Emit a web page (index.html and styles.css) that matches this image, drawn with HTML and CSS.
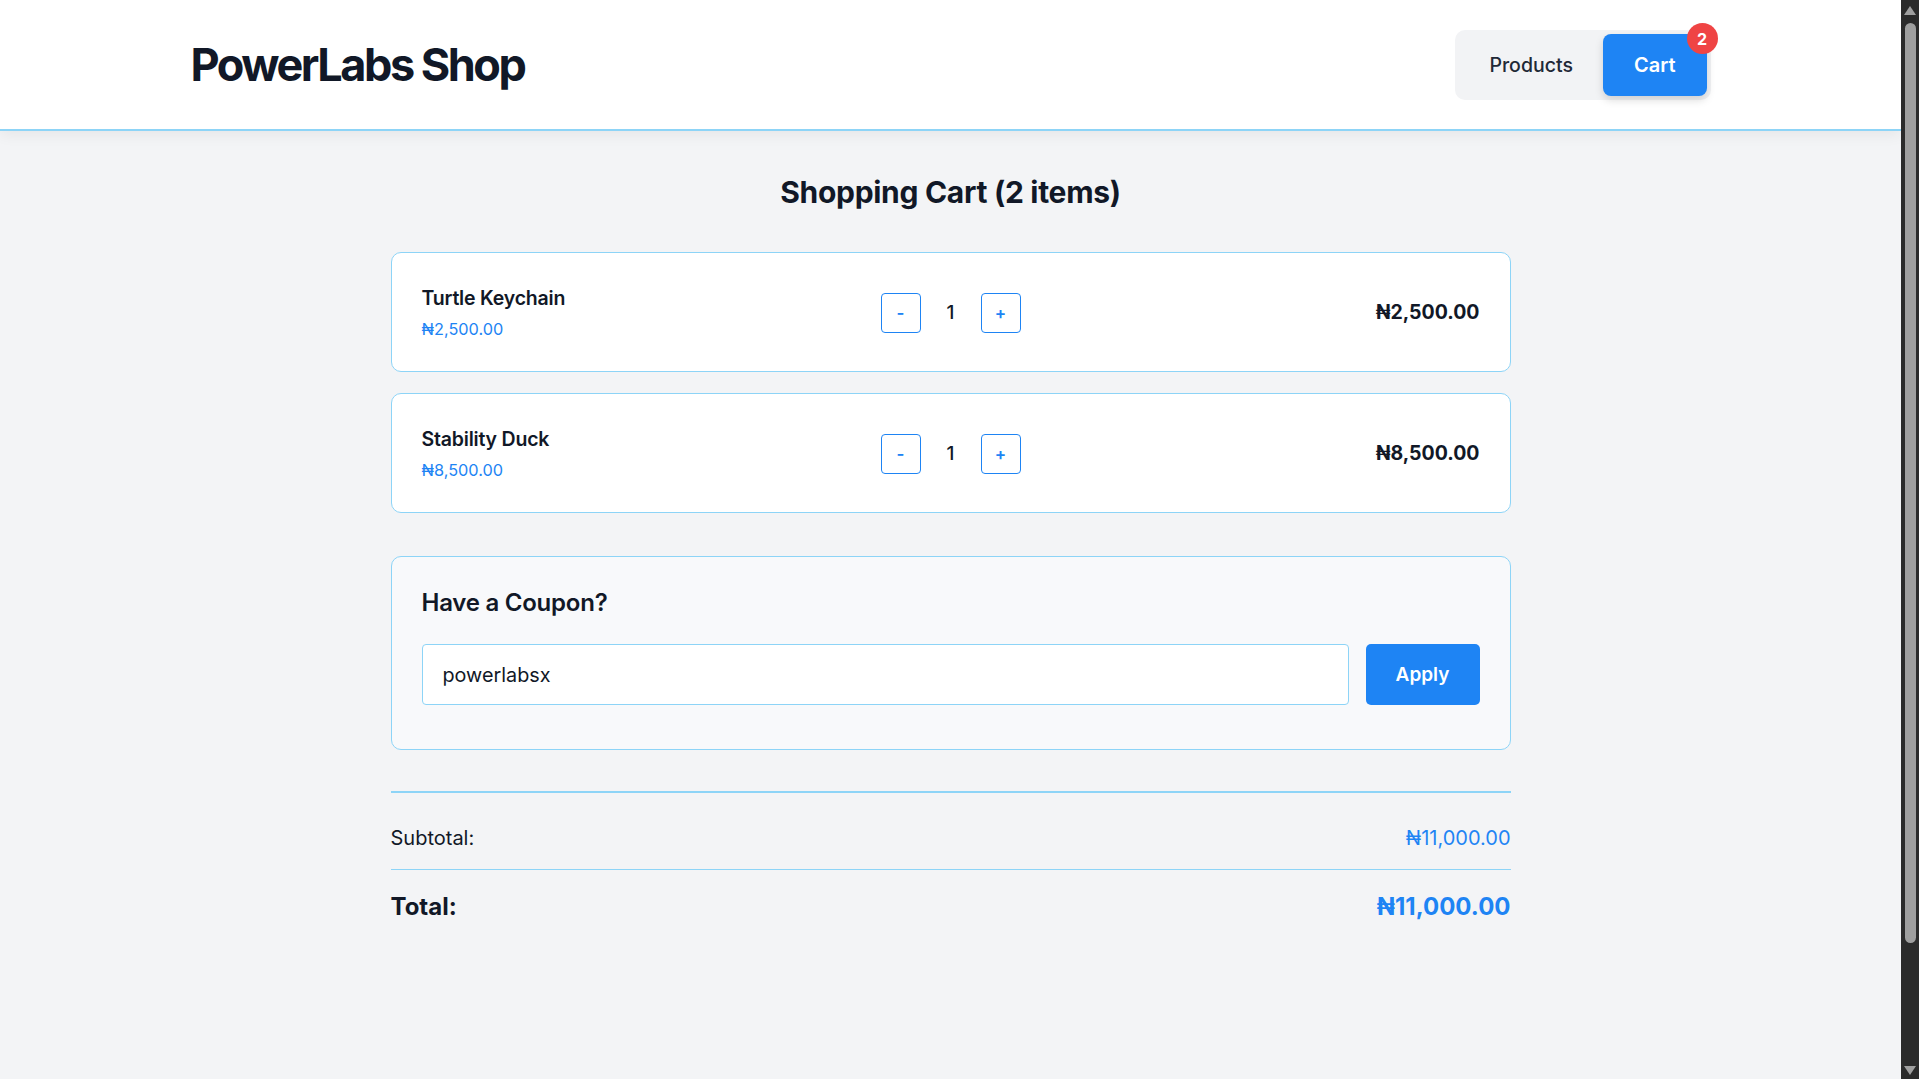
FILE: index.html
```html
<!DOCTYPE html>
<html lang="en">
<head>
<meta charset="utf-8">
<title>PowerLabs Shop</title>
<link rel="stylesheet" href="styles.css">
</head>
<body>
<header class="site-header">
  <div class="header-inner">
    <h1 class="brand">PowerLabs Shop</h1>
    <nav class="nav-pill">
      <button class="nav-btn">Products</button>
      <button class="nav-btn nav-btn-active">Cart<span class="badge">2</span></button>
    </nav>
  </div>
</header>
<main class="main">
  <div class="cart">
    <h2 class="cart-title">Shopping Cart (2 items)</h2>
    <div class="cart-list">
      <div class="cart-item">
        <div class="item-info">
          <div class="item-name">Turtle Keychain</div>
          <div class="item-price">₦2,500.00</div>
        </div>
        <div class="qty">
          <button class="qty-btn">-</button>
          <span class="qty-value">1</span>
          <button class="qty-btn">+</button>
        </div>
        <div class="item-total">₦2,500.00</div>
      </div>
      <div class="cart-item">
        <div class="item-info">
          <div class="item-name">Stability Duck</div>
          <div class="item-price">₦8,500.00</div>
        </div>
        <div class="qty">
          <button class="qty-btn">-</button>
          <span class="qty-value">1</span>
          <button class="qty-btn">+</button>
        </div>
        <div class="item-total">₦8,500.00</div>
      </div>
    </div>
    <section class="coupon">
      <h3 class="coupon-title">Have a Coupon?</h3>
      <div class="coupon-form">
        <input class="coupon-input" type="text" value="powerlabsx">
        <button class="apply-btn">Apply</button>
      </div>
    </section>
    <section class="summary">
      <div class="summary-row">
        <span>Subtotal:</span>
        <span class="summary-value">₦11,000.00</span>
      </div>
      <div class="summary-row summary-total">
        <span>Total:</span>
        <span class="summary-value">₦11,000.00</span>
      </div>
    </section>
  </div>
</main>
<div class="scrollbar" aria-hidden="true">
  <div class="sb-arrow sb-up"></div>
  <div class="sb-thumb"></div>
  <div class="sb-arrow sb-down"></div>
</div>
</body>
</html>
```
FILE: styles.css
```css
html {
  background: #f3f4f6;
}
body {
  margin: 0 18px 0 0;
  background: #f3f4f6;
  color: #111827;
  font-family: Inter, "Noto Sans", sans-serif;
}
button, input {
  font-family: inherit;
}
.site-header {
  background: #ffffff;
  height: 129px;
  border-bottom: 2px solid #8dd4f7;
  box-shadow: 0 4px 14px rgba(0, 0, 0, 0.06);
  position: relative;
  z-index: 1;
}
.header-inner {
  max-width: 1520px;
  height: 100%;
  margin: 0 auto;
  display: flex;
  align-items: center;
  justify-content: space-between;
}
.brand {
  margin: 0;
  font-size: 45px;
  font-weight: 700;
  letter-spacing: -0.055em;
  color: #111827;
}
.nav-pill {
  display: flex;
  background: #f2f3f5;
  border-radius: 10px;
  padding: 4px;
  margin-top: 1px;
}
.nav-btn {
  position: relative;
  height: 62px;
  padding: 0 30px;
  border: none;
  border-radius: 8px;
  background: transparent;
  color: #1f2937;
  font-size: 19.5px;
  font-weight: 500;
}
.nav-btn-active {
  background: #1e84f4;
  color: #ffffff;
  font-size: 20px;
  font-weight: 600;
  box-shadow: 0 4px 8px rgba(0, 0, 0, 0.15);
  padding: 0 31px;
}
.badge {
  position: absolute;
  top: -11px;
  right: -11px;
  width: 31px;
  height: 31px;
  border-radius: 50%;
  background: #ef4444;
  color: #ffffff;
  font-size: 16px;
  font-weight: 700;
  display: flex;
  align-items: center;
  justify-content: center;
}
.main {
  min-height: 1097px;
  box-sizing: border-box;
  padding-top: 43px;
}
.cart {
  width: 1120px;
  margin: 0 auto;
}
.cart-title {
  margin: 0 0 42px;
  text-align: center;
  font-size: 30px;
  line-height: 36px;
  font-weight: 700;
  letter-spacing: -0.01em;
  color: #111827;
}
.cart-list {
  display: flex;
  flex-direction: column;
  gap: 21px;
}
.cart-item {
  height: 120px;
  box-sizing: border-box;
  background: #ffffff;
  border: 1px solid #8dd4f7;
  border-radius: 10px;
  padding: 0 30px;
  display: grid;
  grid-template-columns: 1fr auto 1fr;
  align-items: center;
}
.item-name {
  font-size: 19.5px;
  line-height: 26px;
  font-weight: 600;
  letter-spacing: -0.01em;
  color: #111827;
}
.item-price {
  margin-top: 7px;
  font-size: 16.3px;
  line-height: 22px;
  color: #1e84f4;
}
.qty {
  display: flex;
  align-items: center;
  margin-top: 1px;
}
.qty-btn {
  width: 40px;
  height: 40px;
  background: #ffffff;
  border: 1px solid #1e84f4;
  border-radius: 4px;
  color: #1e84f4;
  font-size: 17px;
  font-weight: 600;
  padding: 0;
}
.qty-value {
  width: 60px;
  text-align: center;
  font-size: 19px;
  font-weight: 500;
  color: #111827;
}
.item-total {
  text-align: right;
  font-size: 19.5px;
  font-weight: 700;
  color: #111827;
}
.coupon {
  margin-top: 43px;
  background: #f8f9fb;
  border: 1px solid #8dd4f7;
  border-radius: 10px;
  padding: 30px 30px 44px;
}
.coupon-title {
  margin: 0 0 26px;
  font-size: 24px;
  line-height: 31px;
  font-weight: 600;
  letter-spacing: -0.01em;
  color: #111827;
}
.coupon-form {
  display: flex;
  gap: 17px;
}
.coupon-input {
  flex: 1;
  height: 61px;
  box-sizing: border-box;
  background: #ffffff;
  border: 1px solid #8dd4f7;
  border-radius: 4px;
  padding: 0 20px;
  font-size: 19.8px;
  color: #111827;
  outline: none;
}
.apply-btn {
  width: 114px;
  height: 61px;
  border: none;
  border-radius: 5px;
  background: #1e84f4;
  color: #ffffff;
  font-size: 19px;
  font-weight: 600;
}
.summary {
  margin-top: 41px;
  border-top: 2px solid #8dd4f7;
  padding-top: 21px;
}
.summary-row {
  display: flex;
  justify-content: space-between;
  align-items: center;
  font-size: 20px;
  line-height: 28px;
  padding: 10px 0 17px;
  border-bottom: 1px solid #8dd4f7;
  color: #111827;
}
.summary-value {
  color: #1e84f4;
}
.summary-total {
  border-bottom: none;
  padding: 19px 0 20px;
  font-size: 24px;
  line-height: 36px;
  font-weight: 700;
}
.scrollbar {
  position: fixed;
  top: 0;
  right: 0;
  width: 18px;
  height: 100vh;
  background: #2b2b2b;
  z-index: 10;
}
.sb-arrow {
  position: absolute;
  left: 3px;
  width: 0;
  height: 0;
  border-left: 6px solid transparent;
  border-right: 6px solid transparent;
}
.sb-up {
  top: 6px;
  border-bottom: 9px solid #a0a0a0;
}
.sb-down {
  bottom: 4px;
  border-top: 9px solid #a0a0a0;
}
.sb-thumb {
  position: absolute;
  top: 23px;
  left: 4px;
  width: 11px;
  height: 920px;
  border-radius: 6px;
  background: #9f9f9f;
}
```
